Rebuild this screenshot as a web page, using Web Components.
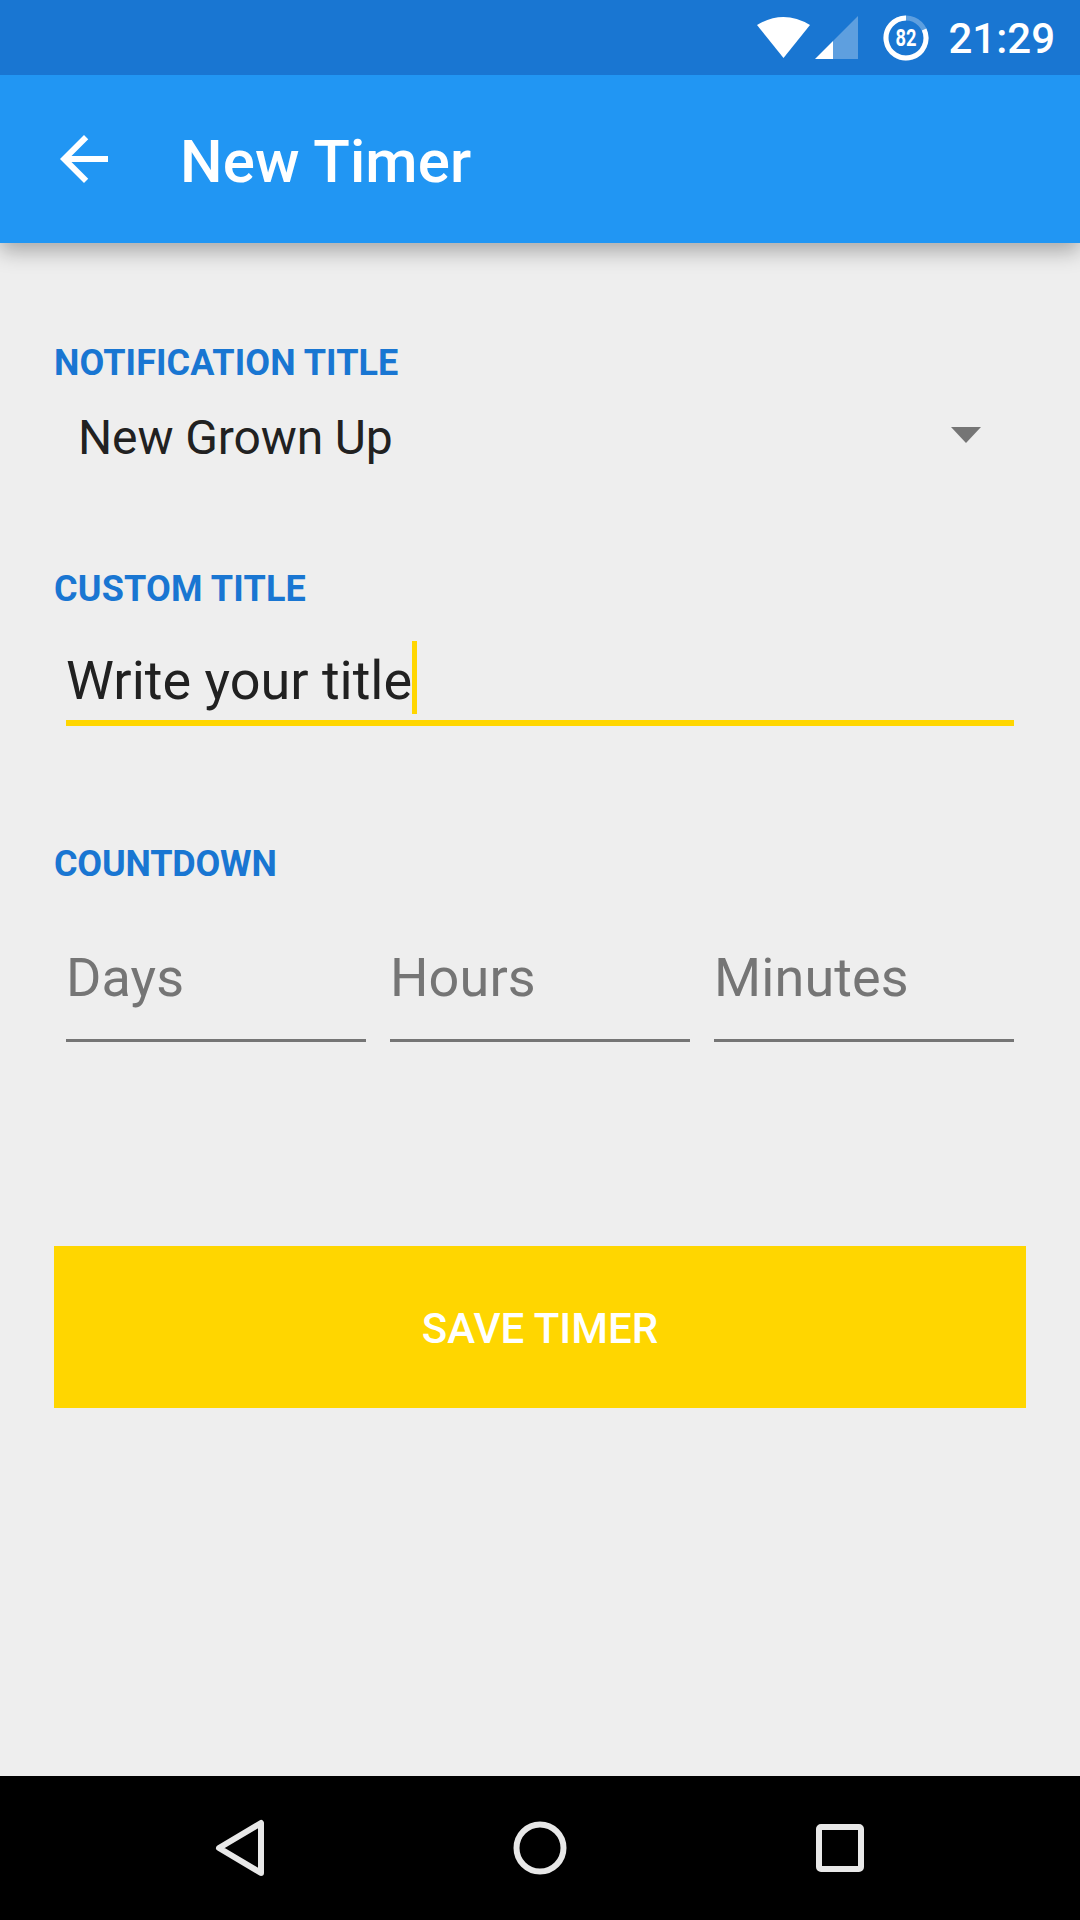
<!DOCTYPE html>
<html>
<head>
<meta charset="utf-8">
<title>New Timer</title>
<style>
    html, body { margin: 0; padding: 0; background: #eeeeee; }
    body { font-family: Roboto, "Liberation Sans", sans-serif; }
</style>
</head>
<body>
<timer-screen>
    <status-bar slot="top"></status-bar>
    <app-toolbar slot="top">New Timer</app-toolbar>

    <form-label style="margin-top: 101px">NOTIFICATION TITLE</form-label>
    <spinner-field>New Grown Up</spinner-field>

    <form-label style="margin-top: 88px; letter-spacing: 0.17px">CUSTOM TITLE</form-label>
    <text-field focused>Write your title</text-field>

    <form-label style="margin-top: 119px; letter-spacing: -0.2px">COUNTDOWN</form-label>
    <div style="display: flex; gap: 24px; margin: 58px 66px 0">
        <text-field hint>Days</text-field>
        <text-field hint>Hours</text-field>
        <text-field hint>Minutes</text-field>
    </div>

    <primary-button style="margin-top: 204px">SAVE TIMER</primary-button>

    <nav-bar slot="bottom"></nav-bar>
</timer-screen>

<script>
// 页面骨架
customElements.define("timer-screen", class extends HTMLElement {
    constructor() {
        super();
        this.attachShadow({ mode: "open" }).innerHTML = `
<style>
    :host { display: flex; flex-direction: column; width: 1080px; height: 1920px; background: #eeeeee; overflow: hidden; }
    main { flex: 1; display: flex; flex-direction: column; }
</style>
<slot name="top"></slot>
<main><slot></slot></main>
<slot name="bottom"></slot>`;
    }
});

// 状态栏
customElements.define("status-bar", class extends HTMLElement {
    constructor() {
        super();
        this.attachShadow({ mode: "open" }).innerHTML = `
<style>
    :host { display: flex; align-items: center; justify-content: flex-end; height: 75px; background: #1976d2; color: #fff; padding-right: 25px; position: relative; z-index: 3; }
    svg { display: block; flex: none; }
    .time { font-size: 42px; font-weight: 500; margin: 2px 0 0 19px; }
    text { font-family: Roboto, sans-serif; }
</style>
<svg width="54" height="42" viewBox="0 0 54 42" style="margin-top:1px"><path d="M0 8 Q26.5 -8 53 8 L26.5 41 Z" fill="#fff"/></svg>
<svg width="44" height="44" viewBox="0 0 44 44" style="margin-left:4px; margin-top:1px">
    <path d="M43 0 V43 H18 V25 Z" fill="#fff" fill-opacity="0.3"/>
    <path d="M0 43 L18 25 V43 Z" fill="#fff"/>
</svg>
<svg width="46" height="46" viewBox="0 0 46 46" style="margin-left:24px">
    <circle cx="23" cy="23" r="20" fill="none" stroke="#fff" stroke-opacity="0.3" stroke-width="5"/>
    <path d="M23 3 A20 20 0 1 0 41.1 14.5" fill="none" stroke="#fff" stroke-width="5"/>
    <text x="23" y="31" font-size="23" font-weight="700" fill="#fff" text-anchor="middle" textLength="21" lengthAdjust="spacingAndGlyphs">82</text>
</svg>
<span class="time">21:29</span>`;
    }
});

// 标题栏
customElements.define("app-toolbar", class extends HTMLElement {
    constructor() {
        super();
        this.attachShadow({ mode: "open" }).innerHTML = `
<style>
    :host { display: flex; align-items: center; height: 168px; background: #2196f3; color: #fff; box-shadow: 0 8px 20px rgba(0,0,0,0.3); position: relative; z-index: 2; }
    svg { display: block; margin-left: 48px; flex: none; }
    .title { margin: 4px 0 0 60px; font-size: 60px; font-weight: 500; letter-spacing: 0.12px; }
</style>
<svg width="72" height="72" viewBox="0 0 24 24"><path fill="#fff" d="M20 11H7.83l5.59-5.59L12 4l-8 8 8 8 1.41-1.41L7.83 13H20v-2z"/></svg>
<span class="title"><slot></slot></span>`;
    }
});

// 分组标题
customElements.define("form-label", class extends HTMLElement {
    constructor() {
        super();
        this.attachShadow({ mode: "open" }).innerHTML = `
<style>
    :host { display: block; margin-left: 54px; font-size: 36px; line-height: 38px; font-weight: 700; color: #1976d2; letter-spacing: 0.07px; }
</style>
<slot></slot>`;
    }
});

// 下拉框
customElements.define("spinner-field", class extends HTMLElement {
    constructor() {
        super();
        this.attachShadow({ mode: "open" }).innerHTML = `
<style>
    :host { display: flex; align-items: center; justify-content: space-between; height: 90px; margin: 10px 99px 0 78px; font-size: 48px; color: #212121; letter-spacing: -0.12px; }
    i { display: block; width: 0; height: 0; margin-bottom: 5px; border-left: 15px solid transparent; border-right: 15px solid transparent; border-top: 16px solid #757575; }
</style>
<span><slot></slot></span>
<i></i>`;
    }
});

// 输入框
customElements.define("text-field", class extends HTMLElement {
    constructor() {
        super();
        this.attachShadow({ mode: "open" }).innerHTML = `
<style>
    :host { display: block; flex: 1; font-size: 54px; color: #212121; }
    :host([focused]) { flex: none; margin: 33px 66px 0; }
    :host([hint]) { color: #757575; letter-spacing: 0.1px; }
    .box { display: flex; align-items: flex-start; height: 73px; padding-bottom: 25px; border-bottom: 3px solid #757575; }
    :host([focused]) .box { padding-bottom: 6px; border-bottom: 6px solid #ffd600; }
    span { display: block; height: 73px; line-height: 73px; }
    :host([focused]) span { line-height: 79px; }
    i { display: none; width: 5px; height: 73px; background: #ffd600; }
    :host([focused]) i { display: block; }
</style>
<div class="box"><span><slot></slot></span><i></i></div>`;
    }
});

// 保存按钮
customElements.define("primary-button", class extends HTMLElement {
    constructor() {
        super();
        this.attachShadow({ mode: "open" }).innerHTML = `
<style>
    :host { display: flex; align-items: center; justify-content: center; box-sizing: border-box; height: 162px; margin: 0 54px; padding-top: 2px; background: #ffd600; color: #fff; font-size: 42px; font-weight: 500; }
</style>
<slot></slot>`;
    }
});

// 底部导航
customElements.define("nav-bar", class extends HTMLElement {
    constructor() {
        super();
        this.attachShadow({ mode: "open" }).innerHTML = `
<style>
    :host { display: block; height: 144px; background: #000; }
    svg { display: block; }
</style>
<svg width="1080" height="144" viewBox="0 0 1080 144" fill="none" stroke="#e8e8e8" stroke-width="6" stroke-linejoin="round">
    <path d="M261 47 V97 L219 72 Z"/>
    <circle cx="540" cy="72" r="23.5"/>
    <rect x="819" y="51" width="42" height="42" rx="2"/>
</svg>`;
    }
});
</script>
</body>
</html>
